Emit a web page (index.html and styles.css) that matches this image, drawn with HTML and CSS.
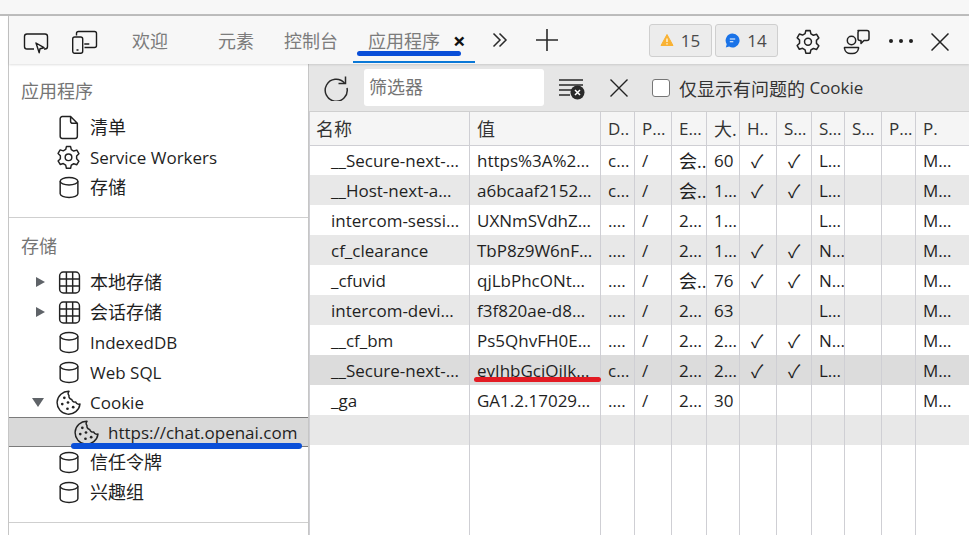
FILE: index.html
```html
<!DOCTYPE html>
<html lang="zh">
<head>
<meta charset="utf-8">
<title>DevTools</title>
<link rel="stylesheet" href="styles.css">
</head>
<body>
<svg class="defs" width="0" height="0" aria-hidden="true">
  <symbol id="i-cyl" viewBox="0 0 24 24"><ellipse cx="12.500" cy="6" rx="8.500" ry="3.600" fill="none" stroke="currentColor" stroke-width="1.400"/><path d="M4 6v12c0 2 3.800 3.600 8.500 3.600s8.500-1.600 8.500-3.600V6" fill="none" stroke="currentColor" stroke-width="1.400"/></symbol>
  <symbol id="i-file" viewBox="0 0 24 24"><path d="M6 1.500h8l6.500 6.500v12.500a2 2 0 0 1-2 2H6a2 2 0 0 1-2-2v-17a2 2 0 0 1 2-2zM14 1.500V6a2 2 0 0 0 2 2h4.500" fill="none" stroke="currentColor" stroke-width="1.400"/></symbol>
  <symbol id="i-gear" viewBox="0 0 24 24"><path d="M10 1.500h4l.7 3 2.300 1.300 3-.9 2 3.400-2.200 2.200v2.800l2.200 2.200-2 3.400-3-.9-2.300 1.300-.7 3h-4l-.7-3L7 17.800l-3 .9-2-3.400 2.200-2.200v-2.800L2 8.100l2-3.400 3 .9 2.300-1.300z" fill="none" stroke="currentColor" stroke-width="1.400" stroke-linejoin="round"/><circle cx="12" cy="11.800" r="3.200" fill="none" stroke="currentColor" stroke-width="1.400"/></symbol>
  <symbol id="i-grid" viewBox="0 0 24 24"><rect x="3.500" y="2" width="19" height="20" rx="3.500" fill="none" stroke="currentColor" stroke-width="1.400"/><path d="M10 2v20M16 2v20M3.500 8.700h19M3.500 15.300h19" fill="none" stroke="currentColor" stroke-width="1.400"/></symbol>
  <symbol id="i-cookie" viewBox="0 0 24 24"><path d="M12.500 1.200A11 11 0 1 0 23 13.500c-1.700.6-3.400-.2-4-2-1.800.5-3.600-.6-3.900-2.500-1.900-.2-3-2-2.600-3.800-.900-.9-1.100-2.600 0-4z" fill="none" stroke="currentColor" stroke-width="1.400" stroke-linejoin="round"/><g fill="currentColor"><circle cx="8" cy="7.500" r="1.300"/><circle cx="6" cy="13.500" r="1.300"/><circle cx="11.500" cy="12" r="1.300"/><circle cx="11" cy="18" r="1.300"/><circle cx="16.500" cy="16.500" r="1.300"/></g></symbol>
</svg>
<div class="topstrip"></div>
<div class="shell">
  <header class="tabbar">
    <svg class="tool first" width="28" height="28" viewBox="0 0 28 28"><path d="M12 23H5a2.500 2.500 0 0 1-2.500-2.500v-10A2.500 2.500 0 0 1 5 8h18a2.500 2.500 0 0 1 2.500 2.500v10A2.500 2.500 0 0 1 23 23h-1" fill="none" stroke="#1c1c1c" stroke-width="1.400"/><path d="M14 17l8 4.700-4 1-.8 4z" fill="none" stroke="#1c1c1c" stroke-width="1.400" stroke-linejoin="round"/></svg>
    <svg class="tool second" width="28" height="28" viewBox="0 0 28 28"><path d="M5.500 9.500v-2a2 2 0 0 1 2-2h16a2 2 0 0 1 2 2v12a2 2 0 0 1-2 2h-10" fill="none" stroke="#1c1c1c" stroke-width="1.400"/><rect x="1.700" y="11" width="10" height="16.300" rx="2" fill="none" stroke="#1c1c1c" stroke-width="1.400"/><path d="M5.500 24h2M13.300 18h5" stroke="#1c1c1c" stroke-width="1.400"/></svg>
    <span class="tab t-welcome">欢迎</span>
    <span class="tab t-elements">元素</span>
    <span class="tab t-console">控制台</span>
    <span class="tab t-app">应用程序<b class="tab-close">×</b><i class="tab-ink"></i><i class="scribble scribble-tab"></i></span>
    <svg class="more" width="18" height="18" viewBox="0 0 18 18"><path d="M2.500 2.500L9 9l-6.500 6.500M8.500 2.500L15 9l-6.500 6.500" fill="none" stroke="#2a2a2a" stroke-width="1.500"/></svg>
    <svg class="plus" width="24" height="24" viewBox="0 0 24 24"><path d="M12 1v22M1 12h22" stroke="#2a2a2a" stroke-width="1.600"/></svg>
    <span class="badge b-warn"><svg width="14" height="14" viewBox="0 0 14 14"><path d="M7 1.500l6 11H1z" fill="#f9b233" stroke="#f9b233" stroke-linejoin="round"/><path d="M7 5.500v3.500M7 10.200v1.200" stroke="#fff" stroke-width="1.200"/></svg>15</span>
    <span class="badge b-msg"><svg width="15" height="15" viewBox="0 0 15 15"><path d="M7.500.5a7 7 0 1 1-3.400 13.100L.8 14.400l.9-3.200A7 7 0 0 1 7.500.500z" fill="#1a73e8"/><path d="M4.800 6h5.400M4.800 8.800h3.500" stroke="#fff" stroke-width="1.100"/></svg>14</span>
    <svg class="gear-top" width="26" height="26"><use href="#i-gear"/></svg>
    <svg class="feedback" width="28" height="28" viewBox="0 0 28 28"><circle cx="8.500" cy="12.500" r="4.200" fill="none" stroke="#222" stroke-width="1.500"/><path d="M1.500 19.500h14v1a6 6 0 0 1-6 5h-2a6 6 0 0 1-6-5z" fill="none" stroke="#222" stroke-width="1.500" stroke-linejoin="round"/><path d="M15 2.500h9a2 2 0 0 1 2 2v6a2 2 0 0 1-2 2h-3l-3 3v-3h-1a2 2 0 0 1-2-2v-6a2 2 0 0 1 2-2z" fill="none" stroke="#222" stroke-width="1.500" stroke-linejoin="round"/></svg>
    <span class="dots"><i></i><i></i><i></i></span>
    <svg class="close-top" width="18" height="18" viewBox="0 0 18 18"><path d="M.5.500l17 17M17.500.500l-17 17" stroke="#222" stroke-width="1.500"/></svg>
  </header>
  <div class="main">
    <aside class="sidebar">
      <section class="side-section s-app">
        <h2 class="side-title">应用程序</h2>
        <div class="row"><svg class="ic"><use href="#i-file"/></svg><span class="cjk">清单</span></div>
        <div class="row"><svg class="ic"><use href="#i-gear"/></svg>Service Workers</div>
        <div class="row"><svg class="ic"><use href="#i-cyl"/></svg><span class="cjk">存储</span></div>
      </section>
      <section class="side-section s-store">
        <h2 class="side-title">存储</h2>
        <div class="row"><span class="arrow right"></span><svg class="ic"><use href="#i-grid"/></svg><span class="cjk">本地存储</span></div>
        <div class="row"><span class="arrow right"></span><svg class="ic"><use href="#i-grid"/></svg><span class="cjk">会话存储</span></div>
        <div class="row"><svg class="ic"><use href="#i-cyl"/></svg>IndexedDB</div>
        <div class="row"><svg class="ic"><use href="#i-cyl"/></svg>Web SQL</div>
        <div class="row"><span class="arrow down"></span><svg class="ic"><use href="#i-cookie"/></svg>Cookie</div>
        <div class="row selected"><svg class="ic"><use href="#i-cookie"/></svg>https://chat.openai.com<i class="scribble scribble-url"></i></div>
        <div class="row"><svg class="ic"><use href="#i-cyl"/></svg><span class="cjk">信任令牌</span></div>
        <div class="row"><svg class="ic"><use href="#i-cyl"/></svg><span class="cjk">兴趣组</span></div>
      </section>
    </aside>
    <div class="panel">
      <div class="toolbar">
        <svg class="reload" width="26" height="26" viewBox="0 0 26 26"><path d="M21.500 8A11 11 0 1 0 24 13" fill="none" stroke="#2a2a2a" stroke-width="1.500"/><path d="M22.500 1.500V8.500h-7" fill="none" stroke="#2a2a2a" stroke-width="1.500"/></svg>
        <div class="filter">筛选器</div>
        <svg class="clear" width="27" height="24" viewBox="0 0 27 24"><path d="M1 4h24M1 9h24M1 14h15M1 19h11" stroke="#2a2a2a" stroke-width="1.400"/><circle cx="19.500" cy="16.500" r="7" fill="#2a2a2a"/><path d="M17 14l5 5M22 14l-5 5" stroke="#fff" stroke-width="1.500"/></svg>
        <svg class="dismiss" width="18" height="18" viewBox="0 0 18 18"><path d="M.5.500l17 17M17.500.500l-17 17" stroke="#222" stroke-width="1.400"/></svg>
        <label class="only"><span class="check"></span><span class="cjk">仅显示有问题的</span>&nbsp;Cookie</label>
      </div>
      <table class="grid">
        <colgroup>
          <col class="c-name"><col class="c-val"><col class="c-d"><col class="c-p"><col class="c-e"><col class="c-sz"><col class="c-h"><col class="c-s1"><col class="c-s2"><col class="c-s3"><col class="c-p2"><col>
        </colgroup>
        <thead>
          <tr><th class="cjk first">名称</th><th class="cjk">值</th><th>D..</th><th>P…</th><th>E…</th><th class="cjk">大.</th><th>H..</th><th>S…</th><th>S…</th><th>S…</th><th>P…</th><th>P.</th></tr>
        </thead>
        <tbody>
          <tr><td class="nm">__Secure-next-…</td><td>https%3A%2…</td><td>c…</td><td>/</td><td class="cjk">会..</td><td>60</td><td class="ck">✓</td><td class="ck">✓</td><td>L…</td><td></td><td></td><td>M…</td></tr>
          <tr><td class="nm">__Host-next-a…</td><td>a6bcaaf2152…</td><td>c…</td><td>/</td><td class="cjk">会..</td><td>1…</td><td class="ck">✓</td><td class="ck">✓</td><td>L…</td><td></td><td></td><td>M…</td></tr>
          <tr><td class="nm">intercom-sessi…</td><td>UXNmSVdhZ…</td><td>….</td><td>/</td><td>2…</td><td>1…</td><td></td><td></td><td>L…</td><td></td><td></td><td>M…</td></tr>
          <tr><td class="nm">cf_clearance</td><td>TbP8z9W6nF…</td><td>….</td><td>/</td><td>2…</td><td>1…</td><td class="ck">✓</td><td class="ck">✓</td><td>N…</td><td></td><td></td><td>M…</td></tr>
          <tr><td class="nm">_cfuvid</td><td>qjLbPhcONt…</td><td>….</td><td>/</td><td class="cjk">会..</td><td>76</td><td class="ck">✓</td><td class="ck">✓</td><td>N…</td><td></td><td></td><td>M…</td></tr>
          <tr><td class="nm">intercom-devi…</td><td>f3f820ae-d8…</td><td>….</td><td>/</td><td>2…</td><td>63</td><td></td><td></td><td>L…</td><td></td><td></td><td>M…</td></tr>
          <tr><td class="nm">__cf_bm</td><td>Ps5QhvFH0E…</td><td>….</td><td>/</td><td>2…</td><td>2…</td><td class="ck">✓</td><td class="ck">✓</td><td>N…</td><td></td><td></td><td>M…</td></tr>
          <tr class="sel"><td class="nm">__Secure-next-…</td><td class="marked">eyJhbGciOiJk…<i class="scribble scribble-red"></i></td><td>c…</td><td>/</td><td>2…</td><td>2…</td><td class="ck">✓</td><td class="ck">✓</td><td>L…</td><td></td><td></td><td>M…</td></tr>
          <tr><td class="nm">_ga</td><td>GA1.2.17029…</td><td>….</td><td>/</td><td>2…</td><td>30</td><td></td><td></td><td></td><td></td><td></td><td>M…</td></tr>
          <tr><td></td><td></td><td></td><td></td><td></td><td></td><td></td><td></td><td></td><td></td><td></td><td></td></tr>
          <tr class="fill"><td></td><td></td><td></td><td></td><td></td><td></td><td></td><td></td><td></td><td></td><td></td><td></td></tr>
        </tbody>
      </table>
    </div>
  </div>
</div>
</body>
</html>
```

FILE: styles.css
```css
* { box-sizing: border-box; }
html, body { margin: 0; padding: 0; height: 100%; overflow: hidden; }
body {
  width: 969px; height: 535px; background: #fff;
  font-family: "Open Sans", "Noto Sans CJK SC", sans-serif;
  font-size: 17px; color: #1f1f1f;
  display: flex; flex-direction: column;
}
.defs { position: absolute; }
.cjk { font-size: 18px; }
.row .cjk { margin-bottom: 2px; }
.topstrip { height: 16px; flex: none; background: #f7f7f7; border-bottom: 2px solid #bdbdbd; }
.shell { flex: 1; min-height: 0; display: flex; flex-direction: column; margin-left: 8px; border-left: 1px solid #c6c6c6; }

.tabbar {
  height: 48px; flex: none; display: flex; align-items: center; background: #f7f7f7;
  box-shadow: 0 1px 2px rgba(0,0,0,.12); position: relative; z-index: 2;
}
.tool.first { margin-left: 13px; }
.tool.second { margin-left: 21px; }
.tab { color: #7c7c7c; white-space: nowrap; font-size: 18px; }
.t-welcome { margin-left: 33px; }
.t-elements { margin-left: 50px; }
.t-console { margin-left: 30px; }
.t-app { margin-left: 30px; position: relative; display: flex; align-items: center; }
.tab-close { font-weight: 700; font-size: 22px; color: #111; margin-left: 13px; line-height: 1; }
.tab-ink { position: absolute; left: -15px; width: 122px; bottom: -10px; height: 2px; background: #0a78d7; }
.scribble { position: absolute; display: block; border-radius: 3px; }
.scribble-tab { left: -11px; width: 104px; bottom: -3px; height: 5px; background: #0a4fd8; }
.more { margin-left: 25px; }
.plus { margin-left: 26px; }
.badge {
  height: 33px; width: 63px; display: flex; align-items: center; justify-content: center; gap: 7px;
  background: #ececec; border: 1px solid #cfcfcf; border-radius: 3px; color: #4a4a4a; font-size: 17px;
}
.b-warn { margin-left: 90px; }
.b-msg { margin-left: 3px; }
.gear-top { margin: 3px 0 0 17px; color: #222; }
.feedback { margin: 3px 0 0 22px; }
.dots { margin: 2px 0 0 18px; display: flex; gap: 6px; }
.dots i { width: 4px; height: 4px; border-radius: 50%; background: #222; }
.close-top { margin: 4px 0 0 18px; }

.main { flex: 1; min-height: 0; display: flex; }
.sidebar { width: 300px; flex: none; border-right: 1px solid #c6c6c6; }
.side-section { border-bottom: 1px solid #cfcfcf; }
.s-app { height: 154px; padding-top: 12px; }
.s-store { height: 305px; }
.side-title { margin: 0; font-weight: 400; font-size: 18px; color: #757575; padding-left: 12px; height: 30px; line-height: 30px; }
.s-app .side-title { height: 36px; }
.s-store .side-title { height: 49px; line-height: 57px; }
.row { height: 30px; display: flex; align-items: center; position: relative; padding-left: 47px; white-space: nowrap; }
.ic { width: 25px; height: 25px; color: #222; margin-right: 9px; flex: none; }
.arrow { position: absolute; width: 0; height: 0; }
.arrow.right { left: 27px; top: 10px; border-left: 9px solid #5f6368; border-top: 5.5px solid transparent; border-bottom: 5.500px solid transparent; }
.arrow.down { left: 23px; top: 11px; border-top: 9px solid #5f6368; border-left: 6.500px solid transparent; border-right: 6.500px solid transparent; }
.selected { background: #d9d9d9; padding-left: 65px; border-top: 1px solid #7b7b7b; border-bottom: 1px solid #7b7b7b; }
.scribble-url { left: 62px; right: 6px; bottom: -3px; height: 6px; background: #0a4fd8; }

.panel { flex: 1; min-width: 0; display: flex; flex-direction: column; }
.toolbar { height: 48px; flex: none; display: flex; align-items: center; background: #e6e6e6; border-bottom: 1px solid #cfcfcf; }
.reload { margin-left: 14px; }
.filter { margin-left: 15px; width: 180px; height: 37px; background: #fff; border-radius: 3px; padding-left: 5px; line-height: 37px; color: #757575; font-size: 18px; }
.clear { margin-left: 14px; }
.dismiss { margin-left: 25px; }
.only { display: flex; align-items: center; margin-left: 24px; color: #333; }
.check { width: 18px; height: 18px; border: 1px solid #767676; border-radius: 3px; background: #fff; margin-right: 9px; }

.grid { flex: 1; width: 660px; table-layout: fixed; border-collapse: collapse; height: 423px; }
.c-name { width: 160px; } .c-val { width: 131px; } .c-d { width: 34px; } .c-p { width: 37px; }
.c-e { width: 35px; } .c-sz { width: 33px; } .c-h { width: 37px; } .c-s1 { width: 35px; }
.c-s2 { width: 33px; } .c-s3 { width: 37px; } .c-p2 { width: 34px; }
th, td { padding: 0 0 0 7px; text-align: left; font-weight: 400; white-space: nowrap; overflow: hidden; border-left: 1px solid #cfcfd4; height: 30px; }
th { background: #f5f5f5; border-bottom: 1px solid #cfcfd4; color: #333; height: 33px; }
th.first { padding-left: 6px; }
td.nm { padding-left: 21px; }
tbody tr:nth-child(even) td { background: #e8e8e8; }
tbody tr.sel td { background: #dcdcdc; }
tbody tr.fill td { height: auto; background: #fff; }
.marked { position: relative; overflow: visible; }
.scribble-red { left: 4px; width: 127px; bottom: 3px; height: 5px; background: #e31b23; }
td.ck { padding-left: 11px; font-family: "Noto Sans CJK SC", sans-serif; font-size: 18px; font-weight: 400; }
```
